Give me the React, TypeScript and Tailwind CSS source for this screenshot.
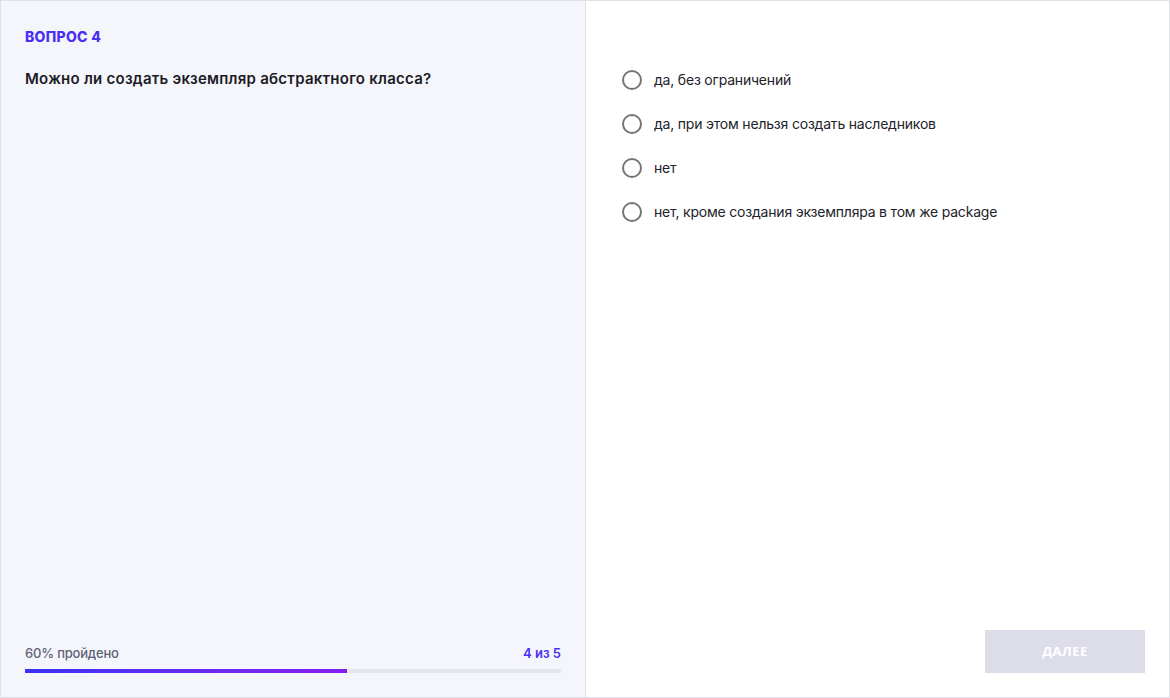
import React from "react";

const options = [
  "да, без ограничений",
  "да, при этом нельзя создать наследников",
  "нет",
  "нет, кроме создания экземпляра в том же package",
];

export default function App() {
  return (
    <div
      className="w-[1170px] h-[698px] border border-[#dfe0e8] flex box-border overflow-hidden"
      style={{ fontFamily: "Inter, 'Noto Sans', sans-serif" }}
    >
      <div className="w-[585px] shrink-0 h-full bg-[#f5f6fb] border-r border-[#dfe0e8] flex flex-col pl-6 pr-6 pt-[28px] pb-[24px]">
        <div className="text-[14px] font-extrabold text-[#4a2ff5] leading-[16px] tracking-[0.3px]">ВОПРОС 4</div>
        <div className="mt-[24px] text-[15px] font-semibold text-[#1b1b26] leading-[20px] tracking-[0.25px]">
          Можно ли создать экземпляр абстрактного класса?
        </div>
        <div className="mt-auto">
          <div className="flex justify-between items-center text-[13px] font-medium leading-[16px]">
            <span className="text-[#5f6378] tracking-[-0.2px]">60% пройдено</span>
            <span className="text-[#4a2ff5] font-semibold">4 из 5</span>
          </div>
          <div className="mt-[8px] h-[4px] w-full bg-[#e6e6ef]">
            <div
              className="h-full bg-gradient-to-r from-[#3a2ff6] to-[#861cef]"
              style={{ width: "60%" }}
            />
          </div>
        </div>
      </div>
      <div className="flex-1 h-full bg-white flex flex-col pl-9 pr-6 pt-[69px] pb-[24px]">
        <div className="flex flex-col gap-6">
          {options.map((o) => (
            <label key={o} className="flex items-center gap-3 h-[20px] cursor-pointer">
              <span className="w-[20px] h-[20px] rounded-full border-2 border-[#757575] bg-white shrink-0" />
              <span className="text-[14px] text-[#222228] leading-[20px] tracking-[-0.2px]">{o}</span>
            </label>
          ))}
        </div>
        <div className="mt-auto flex justify-end">
          <button
            className="w-[160px] h-[43px] bg-[#dcdde8] text-white text-[13px] font-bold tracking-[0.5px]"
            style={{ fontFamily: "'Open Sans', sans-serif" }}
          >
            ДАЛЕЕ
          </button>
        </div>
      </div>
    </div>
  );
}
